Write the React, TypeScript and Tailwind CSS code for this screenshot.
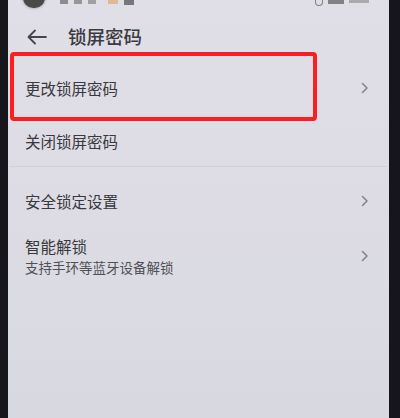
const cjk = { fontFamily: '"Noto Sans CJK SC", "Noto Sans", sans-serif' };

const Chevron = () => (
  <svg width="8" height="12" viewBox="0 0 8 12" fill="none" className="shrink-0">
    <path d="M1.5 1.5 L6 6 L1.5 10.5" stroke="#85858c" strokeWidth="1.6" strokeLinecap="round" strokeLinejoin="round" />
  </svg>
);

interface RowProps {
  title: string;
  subtitle?: string;
  chevron?: boolean;
  className?: string;
}

const Row = ({ title, subtitle, chevron = true, className = '' }: RowProps) => (
  <div className={`flex items-center pl-[17px] pr-[20px] ${className}`}>
    <div className="flex-1 flex flex-col">
      <span className="text-[15.5px] leading-[20px] text-[#38383e]">{title}</span>
      {subtitle && (
        <span className="text-[13.5px] leading-[18px] text-[#505057] mt-[2px]">{subtitle}</span>
      )}
    </div>
    {chevron && <Chevron />}
  </div>
);

export default function App() {
  return (
    <div className="w-[400px] h-[418px] flex bg-[#14141a] overflow-hidden" style={cjk}>
      <div className="w-[8px] bg-[#17161d]" />
      <div className="flex-1 flex flex-col bg-gradient-to-b from-[#e0dee6] via-[#dddce4] to-[#d8d9e0]">
        {/* status bar */}
        <div className="h-[14px] flex items-start">
          <div className="ml-[15px] mt-[-13px] w-[22px] h-[21px] rounded-full bg-[#4a4848] shadow-[0_0_3px_#888]" />
          <div className="ml-[15px] flex items-start gap-[6px] opacity-60">
            <div className="w-[8px] h-[4px] bg-[#555]" />
            <div className="w-[8px] h-[4px] bg-[#666]" />
            <div className="w-[8px] h-[4px] bg-[#777]" />
            <div className="w-[10px] h-[4px] bg-[#e0a060] ml-[6px]" />
            <div className="w-[10px] h-[5px] bg-[#333]" />
          </div>
          <div className="ml-auto mr-[20px] flex items-start gap-[5px] opacity-60">
            <div className="w-[8px] h-[6px] border-[1.5px] border-t-0 border-[#444] rounded-b-full" />
            <div className="w-[16px] h-[4px] bg-[#444]" />
            <div className="w-[20px] h-[3px] bg-[#888]" />
          </div>
        </div>

        {/* header */}
        <div className="h-[46px] flex items-center pl-[19px]">
          <svg width="20" height="16" viewBox="0 0 20 16" fill="none">
            <path d="M19 8 H1.5 M8 1.5 L1.5 8 L8 14.5" stroke="#45454a" strokeWidth="1.8" strokeLinecap="round" strokeLinejoin="round" />
          </svg>
          <span className="ml-[21px] text-[18.5px] font-medium text-[#3a3a40]">锁屏密码</span>
        </div>

        {/* group 1 */}
        <div className="relative">
          <Row title="更改锁屏密码" className="h-[56px]" />
          <div className="absolute left-[2px] top-[-8px] w-[307px] h-[69px] border-[4px] border-[#ff1e1e] rounded-[4px]" />
        </div>
        <Row title="关闭锁屏密码" chevron={false} className="h-[50px]" />
        <div className="h-px bg-[#d0d0d7] mx-[2px]" />

        {/* group 2 */}
        <Row title="安全锁定设置" className="h-[48px] mt-[10px]" />
        <Row title="智能解锁" subtitle="支持手环等蓝牙设备解锁" className="h-[62px]" />
      </div>
      <div className="w-[11px] bg-[#16151c]" />
    </div>
  );
}
